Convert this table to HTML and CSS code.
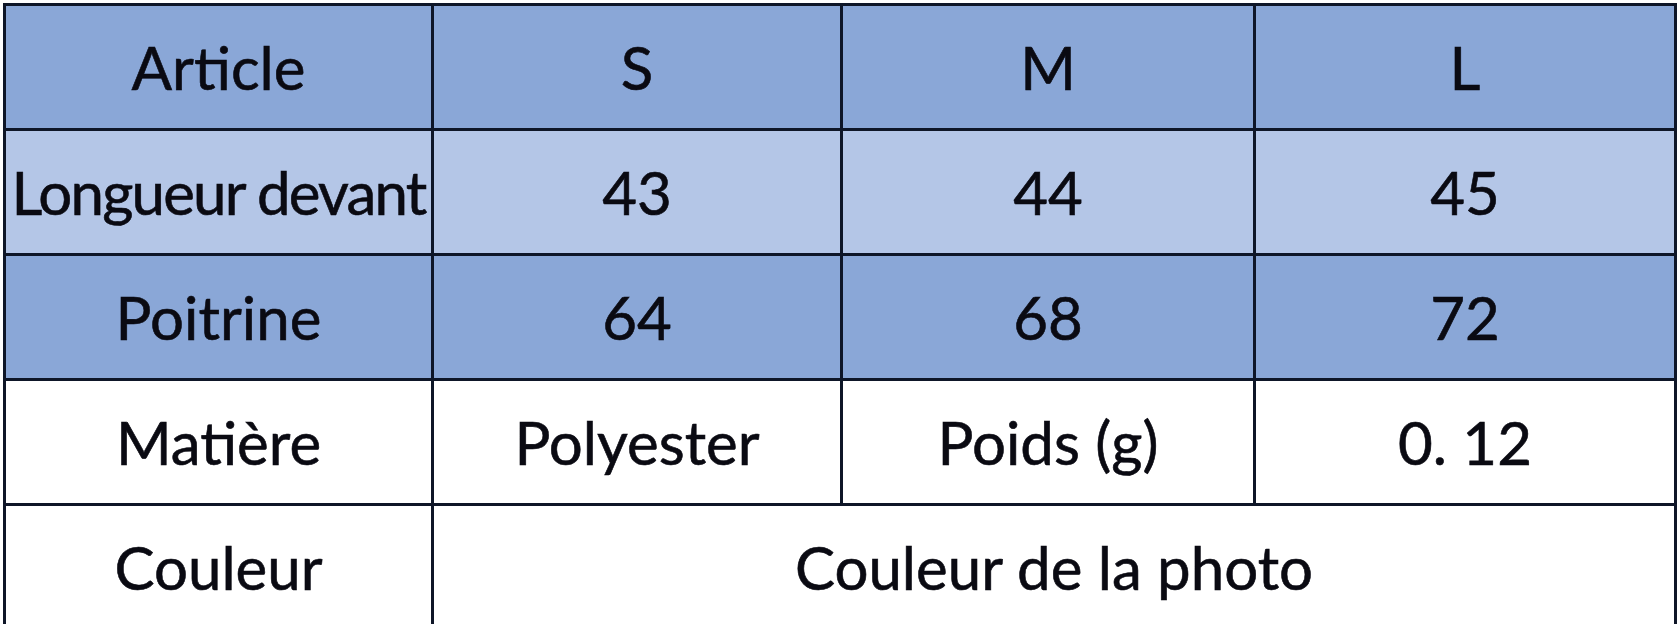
FILE: index.html
```html
<!DOCTYPE html>
<html lang="fr">
<head>
<meta charset="utf-8">
<title>Tableau des tailles</title>
<link rel="stylesheet" href="styles.css">
</head>
<body>
<table class="size-table">
  <colgroup>
    <col class="c1"><col class="c2"><col class="c3"><col class="c4">
  </colgroup>
  <tr class="row-head">
    <td>Article</td><td>S</td><td>M</td><td>L</td>
  </tr>
  <tr class="row-light">
    <td class="tight">Longueur devant</td><td>43</td><td>44</td><td>45</td>
  </tr>
  <tr class="row-head">
    <td>Poitrine</td><td>64</td><td>68</td><td>72</td>
  </tr>
  <tr class="row-white">
    <td>Matière</td><td>Polyester</td><td>Poids (g)</td><td>0. 12</td>
  </tr>
  <tr class="row-white">
    <td>Couleur</td><td colspan="3">Couleur de la photo</td>
  </tr>
</table>
</body>
</html>
```

FILE: styles.css
```css
html, body {
  margin: 0;
  padding: 0;
  background: #ffffff;
}

body {
  padding: 3px 0 0 3px;
  overflow: hidden;
  height: 624px;
  box-sizing: border-box;
}

.size-table {
  border-collapse: collapse;
  table-layout: fixed;
  width: 1673px;
  font-family: Lato, "Open Sans", sans-serif;
  font-size: 60px;
  color: #0a0a12;
  -webkit-text-stroke: 0.6px #0a0a12;
}

.c1 { width: 428px; }
.c2 { width: 409px; }
.c3 { width: 413px; }
.c4 { width: 421px; }

.size-table td {
  border: 3px solid #0e1628;
  height: 122px;
  padding: 0;
  text-align: center;
  vertical-align: middle;
  line-height: 1;
  white-space: nowrap;
}

.size-table td.tight {
  letter-spacing: -1.8px;
}

.row-head td { background: #8aa7d7; }
.row-light td { background: #b4c6e7; }
.row-white td { background: #ffffff; }
```
